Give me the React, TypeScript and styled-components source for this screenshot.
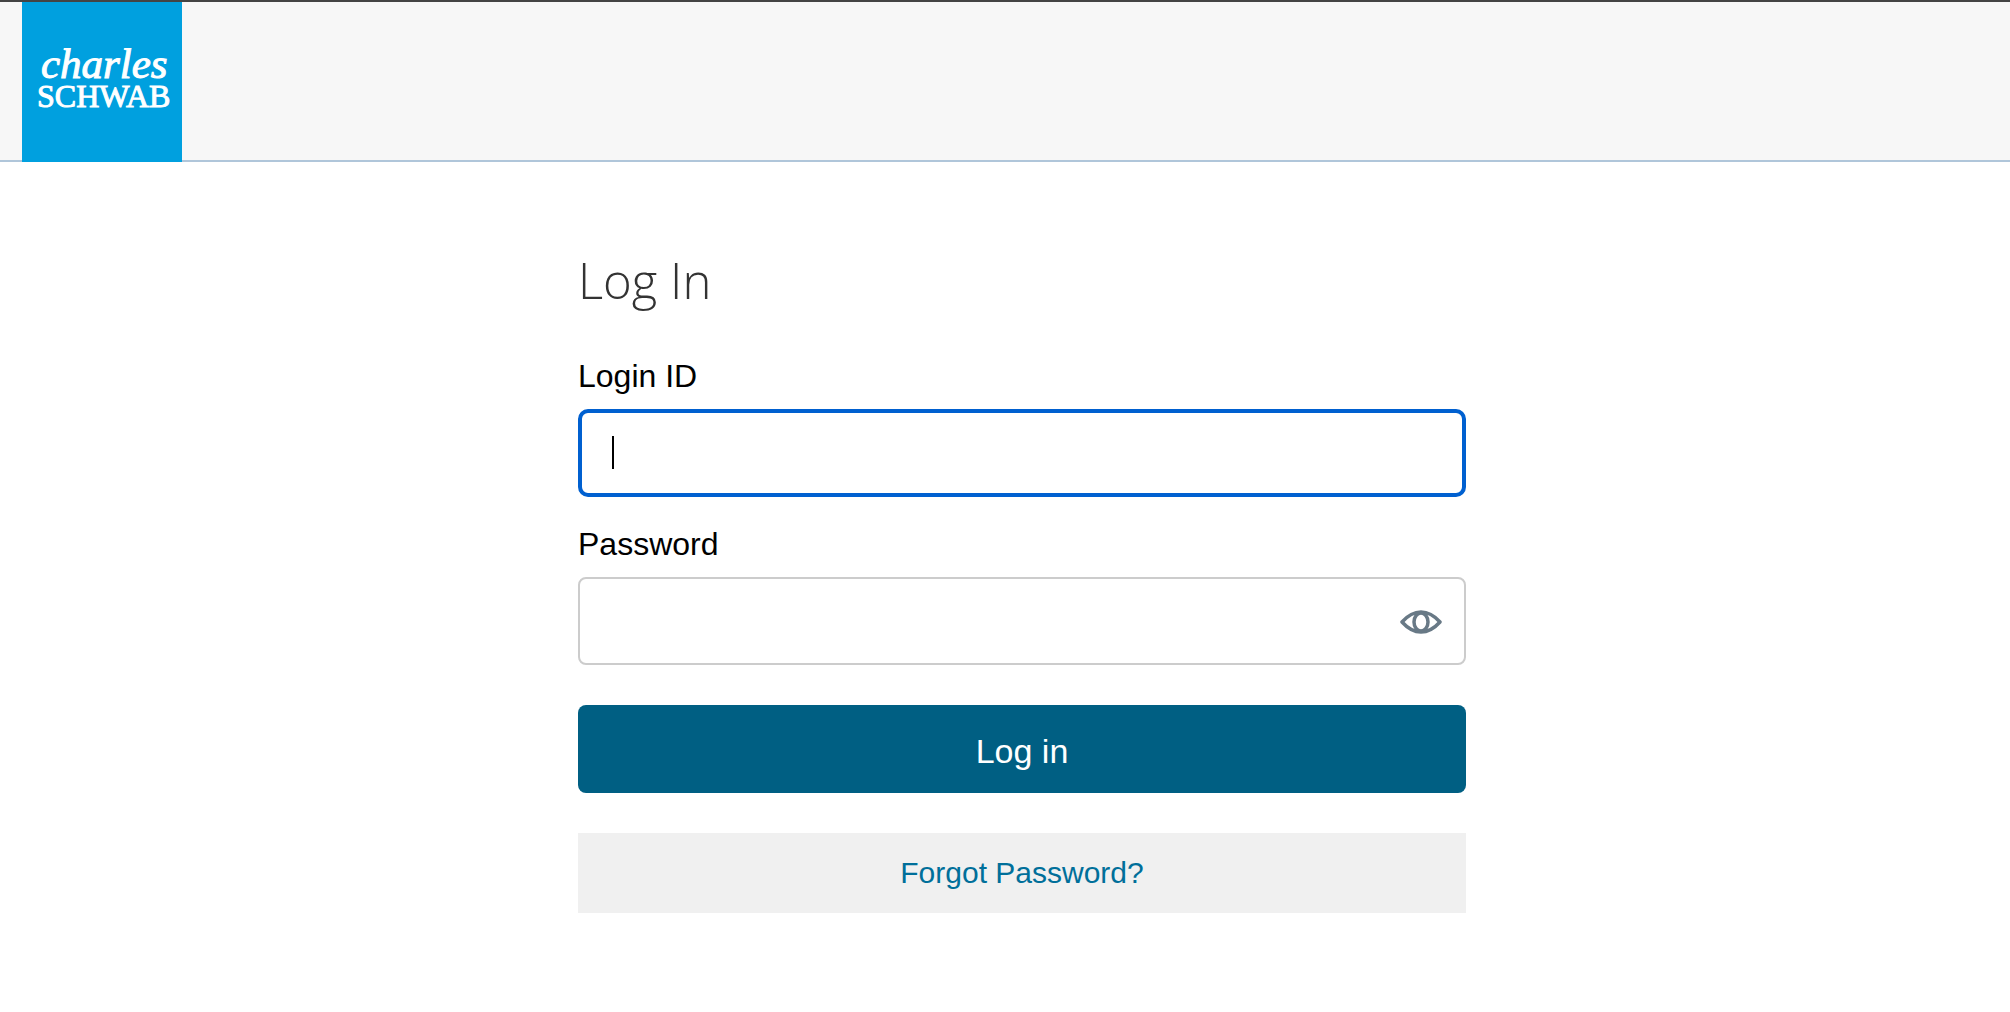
import React, { useState } from "react";
import styled, { createGlobalStyle, keyframes } from "styled-components";

const GlobalStyle = createGlobalStyle`
  *, *::before, *::after { box-sizing: border-box; }
  body {
    margin: 0;
    background: #ffffff;
    color: #000000;
    font-family: "Liberation Sans", Arial, sans-serif;
  }
`;

const Page = styled.div`
  border-top: 2px solid #444444;
`;

const Header = styled.header`
  display: flex;
  padding: 0 22px;
  background: #f7f7f7;
  box-shadow: inset 0 -2px 0 #b0c6da;
`;

const Logo = styled.svg`
  display: block;
  width: 160px;
  height: 160px;
  background: #00a0df;
  fill: #ffffff;
  stroke: #ffffff;
  stroke-width: 1;
  font-family: "Liberation Serif", "Times New Roman", serif;
`;

const Main = styled.main`
  display: flex;
  justify-content: center;
  padding: 86px 0 86px 34px;
`;

const Form = styled.form`
  display: flex;
  flex-direction: column;
  width: 100%;
  max-width: 888px;
`;

const Title = styled.h1`
  margin: 0 0 43px;
  color: #333333;
  font-family: "Open Sans", sans-serif;
  font-size: 49px;
  font-weight: 300;
  line-height: 64px;
`;

const Field = styled.div<{ $gap: number }>`
  display: flex;
  flex-direction: column;
  gap: 12px;
  margin-bottom: ${(p) => p.$gap}px;
`;

const Label = styled.label`
  font-size: 32px;
  line-height: 42px;
`;

const InputWrap = styled.div`
  position: relative;
`;

const Input = styled.input<{ $active?: boolean }>`
  display: block;
  width: 100%;
  height: 88px;
  padding: 0 ${(p) => (p.$active ? 30 : 88)}px 0 ${(p) => (p.$active ? 30 : 32)}px;
  border: ${(p) => (p.$active ? "4px solid #0060d0" : "2px solid #cccccc")};
  border-radius: ${(p) => (p.$active ? 10 : 8)}px;
  outline: none;
  background: #ffffff;
  caret-color: transparent;
  font: inherit;
  font-size: 30px;
`;

const blink = keyframes`
  0%, 80% { opacity: 1; }
  81%, 100% { opacity: 0; }
`;

const Caret = styled.span`
  position: absolute;
  top: 27px;
  left: 34px;
  width: 2px;
  height: 33px;
  background: #000000;
  pointer-events: none;
  animation: ${blink} 8s step-end infinite;
`;

const EyeButton = styled.button`
  position: absolute;
  top: 21px;
  right: 21px;
  display: flex;
  align-items: center;
  justify-content: center;
  width: 48px;
  height: 48px;
  padding: 0;
  border: 0;
  background: none;
  cursor: pointer;
`;

const SubmitButton = styled.button`
  height: 88px;
  margin-bottom: 40px;
  padding: 4px 0 0;
  border: 0;
  border-radius: 8px;
  background: #005f83;
  color: #ffffff;
  font: inherit;
  font-size: 34px;
  cursor: pointer;
`;

const ForgotLink = styled.a`
  display: flex;
  align-items: center;
  justify-content: center;
  height: 80px;
  background: #f0f0f0;
  color: #006f9a;
  font-size: 30px;
  text-decoration: none;
`;

function BrandLogo() {
  return (
    <Logo viewBox="0 0 160 160" role="img" aria-label="Charles Schwab">
      <text>
        <tspan x="19" y="76" fontSize="43" fontStyle="italic">
          charles
        </tspan>
        <tspan x="15" y="105" fontSize="32">
          SCHWAB
        </tspan>
      </text>
    </Logo>
  );
}

function EyeIcon() {
  return (
    <svg width="42" height="26" viewBox="0 0 42 26" fill="none" stroke="#687986" strokeWidth="3.5" strokeLinejoin="round" aria-hidden="true">
      <path d="M2 13Q11 3 21 3T40 13Q31 23 21 23T2 13Z" />
      <ellipse cx="21" cy="13" rx="7" ry="9" />
    </svg>
  );
}

export default function App() {
  const [loginId, setLoginId] = useState("");
  const [password, setPassword] = useState("");
  const [visible, setVisible] = useState(false);

  return (
    <>
      <GlobalStyle />
      <Page>
        <Header>
          <BrandLogo />
        </Header>
        <Main>
          <Form onSubmit={(e) => e.preventDefault()}>
            <Title>Log In</Title>
            <Field $gap={26}>
              <Label htmlFor="login-id">Login ID</Label>
              <InputWrap>
                <Input
                  id="login-id"
                  type="text"
                  $active
                  value={loginId}
                  onChange={(e) => setLoginId(e.target.value)}
                />
                {loginId === "" && <Caret />}
              </InputWrap>
            </Field>
            <Field $gap={40}>
              <Label htmlFor="password">Password</Label>
              <InputWrap>
                <Input
                  id="password"
                  type={visible ? "text" : "password"}
                  value={password}
                  onChange={(e) => setPassword(e.target.value)}
                />
                <EyeButton type="button" aria-label="Show password" onClick={() => setVisible(!visible)}>
                  <EyeIcon />
                </EyeButton>
              </InputWrap>
            </Field>
            <SubmitButton type="submit">Log in</SubmitButton>
            <ForgotLink href="#forgot">Forgot Password?</ForgotLink>
          </Form>
        </Main>
      </Page>
    </>
  );
}
